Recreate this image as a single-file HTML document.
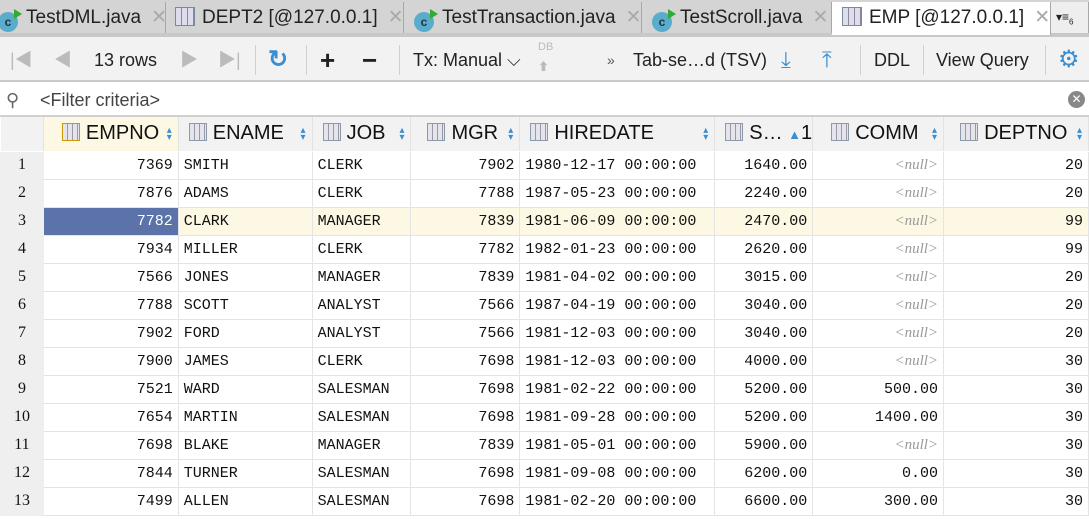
<!DOCTYPE html>
<html><head><meta charset="utf-8"><style>
*{box-sizing:border-box;margin:0;padding:0}
body{width:1089px;height:519px;overflow:hidden;background:#fff;font-family:"Liberation Sans","Noto Sans CJK SC",sans-serif;position:relative}
.tabs{position:absolute;top:0;left:0;width:1089px;height:37px;background:#d4d4d4;border-bottom:4px solid #c8c8c8}
.tab{position:absolute;top:2px;height:31px;border-right:1px solid #a8a8a8;font-size:19px;color:#222;line-height:31px;white-space:nowrap;overflow:hidden}
.tab .x{color:#aaa;margin-left:10px}
.tab.act{background:#fff;top:2px;height:33px}
.ci{display:inline-block;width:20px;height:20px;border-radius:50%;background:#5aaccc;color:#234;font-size:12px;line-height:20px;text-align:center;vertical-align:-3px;margin-right:8px;font-weight:bold;position:relative}
.ci:after{content:"";position:absolute;right:-4px;top:-3px;border-left:8px solid #3a3;border-top:5px solid transparent;border-bottom:5px solid transparent}
.ti{display:inline-block;width:20px;height:19px;border:1px solid #7a8a9a;background:repeating-linear-gradient(90deg,#dde 0 5px,#889 5px 6px),#dde;vertical-align:-3px;margin-right:7px;position:relative}
.toolbar{position:absolute;top:37px;left:0;width:1089px;height:45px;background:#f2f2f2;border-bottom:2px solid #c9c9c9}
.tb{position:absolute;top:0;line-height:46px;font-size:18px;color:#222}
.sep{position:absolute;top:8px;width:1px;height:30px;background:#d0d0d0}
.filter{position:absolute;top:84px;left:0;width:1089px;height:33px;background:#fff;border-bottom:2px solid #d0d0d0;font-size:18px;color:#444;line-height:32px}
table{position:absolute;top:117px;left:0;border-collapse:collapse;table-layout:fixed}
th{height:34px;background:#f2f2f2;font-weight:normal;font-size:20px;color:#111;text-align:left;border-right:1px solid #e2e2e2;border-bottom:1px solid #fff;white-space:nowrap;overflow:hidden;padding-left:10px;position:relative}
th .s{position:absolute;right:6px;top:10px;color:#3b8fd0;font-size:10px;line-height:7px}
td{height:28px;border:1px solid #e4e4e4;font-family:"Liberation Mono","Noto Serif CJK SC",monospace;font-size:15px;color:#111;padding:0 5px;white-space:nowrap;overflow:hidden}
td.n{background:#efefef;text-align:center;border-color:#efefef;font-family:"Liberation Serif",serif;font-size:16px}
td.r{text-align:right}
td.nl{text-align:right;color:#999;font-style:italic;font-family:"Liberation Serif",serif}
tr.cur td{background:#fdf8e4}
tr.cur td.n{background:#efefef}
tr.cur td.sel{background:#5b73a8;color:#fff}
.hi{display:inline-block;width:18px;height:18px;border:1px solid #8a9aaa;background:repeating-linear-gradient(90deg,#e4e4ea 0 4px,#99a 4px 5px);vertical-align:-2px;margin-right:6px}
</style></head><body>
<div class="tabs">
<div class="tab" style="left:-8px;width:174px;padding-left:6px"><span class="ci">c</span>TestDML.java<span class="x">✕</span></div>
<div class="tab" style="left:166px;width:238px;padding-left:9px"><span class="ti"></span>DEPT2 [@127.0.0.1]<span class="x">✕</span></div>
<div class="tab" style="left:404px;width:238px;padding-left:10px"><span class="ci">c</span>TestTransaction.java<span class="x">✕</span></div>
<div class="tab" style="left:642px;width:190px;padding-left:10px"><span class="ci">c</span>TestScroll.java<span class="x">✕</span></div>
<div class="tab act" style="left:832px;width:219px;padding-left:10px"><span class="ti"></span>EMP [@127.0.0.1]<span class="x">✕</span></div>
<div class="tab" style="left:1051px;width:38px;padding-left:5px;background:#eee;font-size:12px">▾≡<sub style="font-size:8px">6</sub></div>
</div>
<div class="toolbar">
<div class="tb" style="left:10px;color:#bbb">|◀</div>
<div class="tb" style="left:54px;color:#bbb">◀</div>
<div class="tb" style="left:94px">13 rows</div>
<div class="tb" style="left:180px;color:#bbb">▶</div>
<div class="tb" style="left:218px;color:#bbb">▶|</div>
<div class="sep" style="left:255px"></div>
<div class="tb" style="left:268px;color:#3b8fd0;font-size:24px;font-weight:bold">↻</div>
<div class="sep" style="left:306px"></div>
<div class="tb" style="left:320px;font-size:26px;font-weight:bold">+</div>
<div class="tb" style="left:362px;font-size:26px;font-weight:bold">−</div>
<div class="sep" style="left:399px"></div>
<div class="tb" style="left:413px">Tx: Manual ⌵</div>
<div class="tb" style="left:538px;color:#bbb;font-size:11px;line-height:20px">DB<br>⬆</div>
<div class="tb" style="left:607px;font-size:14px;color:#555">»</div>
<div class="tb" style="left:633px">Tab-se…d (TSV)</div>
<div class="tb" style="left:781px;color:#3b8fd0;font-size:22px">⤓</div>
<div class="tb" style="left:822px;color:#3b8fd0;font-size:22px">⤒</div>
<div class="sep" style="left:860px"></div>
<div class="tb" style="left:874px">DDL</div>
<div class="sep" style="left:923px"></div>
<div class="tb" style="left:936px">View Query</div>
<div class="sep" style="left:1045px"></div>
<div class="tb" style="left:1058px;color:#3b8fd0;font-size:24px">⚙</div>
</div>
<div class="filter"><span style="position:absolute;left:6px;color:#666">⚲</span><span style="position:absolute;left:40px">&lt;Filter criteria&gt;</span><span style="position:absolute;right:4px;top:7px;width:17px;height:17px;border-radius:50%;background:#888;color:#fff;font-size:12px;line-height:17px;text-align:center">✕</span></div>
<table>
<colgroup><col style="width:43px"><col style="width:135px"><col style="width:134px"><col style="width:99px"><col style="width:109px"><col style="width:195px"><col style="width:98px"><col style="width:131px"><col style="width:145px"></colgroup>
<tr><th style="border-right:1px solid #e2e2e2"></th>
<th style="background:#fdf8e4;padding-left:18px"><span class="hi" style="border-color:#c90"></span>EMPNO<span class="s">▴<br>▾</span></th>
<th><span class="hi"></span>ENAME<span class="s">▴<br>▾</span></th>
<th><span class="hi"></span>JOB<span class="s">▴<br>▾</span></th>
<th style="padding-left:16px"><span class="hi"></span>MGR<span class="s">▴<br>▾</span></th>
<th><span class="hi"></span>HIREDATE<span class="s">▴<br>▾</span></th>
<th><span class="hi"></span>S… <span style="color:#3b8fd0;font-size:13px">▲</span>1</th>
<th style="padding-left:18px"><span class="hi"></span>COMM<span class="s">▴<br>▾</span></th>
<th style="padding-left:16px"><span class="hi"></span>DEPTNO<span class="s">▴<br>▾</span></th></tr>
<tr><td class="n">1</td><td class="r">7369</td><td>SMITH</td><td>CLERK</td><td class="r">7902</td><td>1980-12-17 00:00:00</td><td class="r">1640.00</td><td class="nl">&lt;null&gt;</td><td class="r">20</td></tr>
<tr><td class="n">2</td><td class="r">7876</td><td>ADAMS</td><td>CLERK</td><td class="r">7788</td><td>1987-05-23 00:00:00</td><td class="r">2240.00</td><td class="nl">&lt;null&gt;</td><td class="r">20</td></tr>
<tr class="cur"><td class="n">3</td><td class="r sel">7782</td><td>CLARK</td><td>MANAGER</td><td class="r">7839</td><td>1981-06-09 00:00:00</td><td class="r">2470.00</td><td class="nl">&lt;null&gt;</td><td class="r">99</td></tr>
<tr><td class="n">4</td><td class="r">7934</td><td>MILLER</td><td>CLERK</td><td class="r">7782</td><td>1982-01-23 00:00:00</td><td class="r">2620.00</td><td class="nl">&lt;null&gt;</td><td class="r">99</td></tr>
<tr><td class="n">5</td><td class="r">7566</td><td>JONES</td><td>MANAGER</td><td class="r">7839</td><td>1981-04-02 00:00:00</td><td class="r">3015.00</td><td class="nl">&lt;null&gt;</td><td class="r">20</td></tr>
<tr><td class="n">6</td><td class="r">7788</td><td>SCOTT</td><td>ANALYST</td><td class="r">7566</td><td>1987-04-19 00:00:00</td><td class="r">3040.00</td><td class="nl">&lt;null&gt;</td><td class="r">20</td></tr>
<tr><td class="n">7</td><td class="r">7902</td><td>FORD</td><td>ANALYST</td><td class="r">7566</td><td>1981-12-03 00:00:00</td><td class="r">3040.00</td><td class="nl">&lt;null&gt;</td><td class="r">20</td></tr>
<tr><td class="n">8</td><td class="r">7900</td><td>JAMES</td><td>CLERK</td><td class="r">7698</td><td>1981-12-03 00:00:00</td><td class="r">4000.00</td><td class="nl">&lt;null&gt;</td><td class="r">30</td></tr>
<tr><td class="n">9</td><td class="r">7521</td><td>WARD</td><td>SALESMAN</td><td class="r">7698</td><td>1981-02-22 00:00:00</td><td class="r">5200.00</td><td class="r">500.00</td><td class="r">30</td></tr>
<tr><td class="n">10</td><td class="r">7654</td><td>MARTIN</td><td>SALESMAN</td><td class="r">7698</td><td>1981-09-28 00:00:00</td><td class="r">5200.00</td><td class="r">1400.00</td><td class="r">30</td></tr>
<tr><td class="n">11</td><td class="r">7698</td><td>BLAKE</td><td>MANAGER</td><td class="r">7839</td><td>1981-05-01 00:00:00</td><td class="r">5900.00</td><td class="nl">&lt;null&gt;</td><td class="r">30</td></tr>
<tr><td class="n">12</td><td class="r">7844</td><td>TURNER</td><td>SALESMAN</td><td class="r">7698</td><td>1981-09-08 00:00:00</td><td class="r">6200.00</td><td class="r">0.00</td><td class="r">30</td></tr>
<tr><td class="n">13</td><td class="r">7499</td><td>ALLEN</td><td>SALESMAN</td><td class="r">7698</td><td>1981-02-20 00:00:00</td><td class="r">6600.00</td><td class="r">300.00</td><td class="r">30</td></tr>
</table>
</body></html>
